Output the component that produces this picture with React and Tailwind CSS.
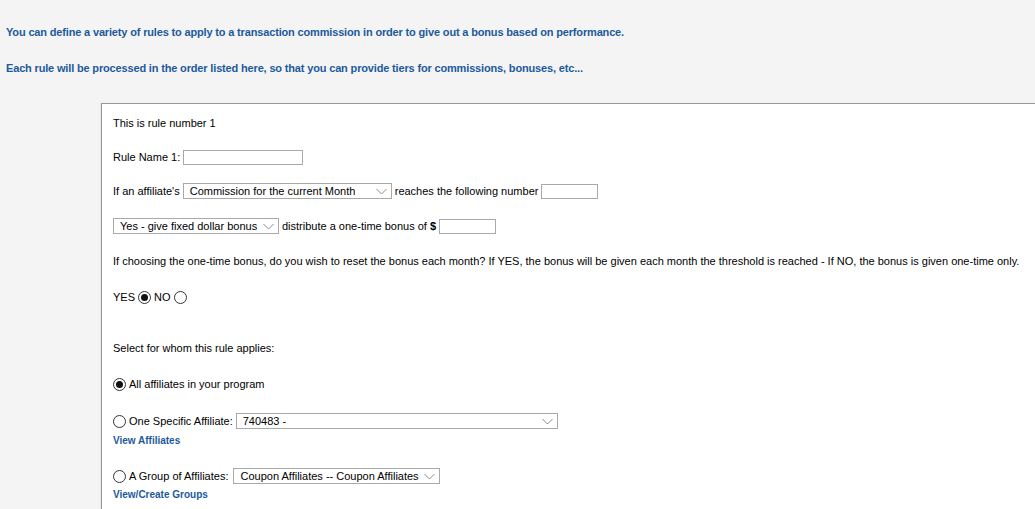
// Commission bonus rule editor — legacy admin form look.
function Chevron() {
  return (
    <svg width="11" height="7" viewBox="0 0 11 7" className="shrink-0" fill="none">
      <polyline points="0.5,1 5.5,6 10.5,1" stroke="#8a8a8a" strokeWidth="1" />
    </svg>
  )
}

function Select({ value, width }) {
  return (
    <span
      className={`inline-flex h-[16px] items-center justify-between border border-[#a9a9a9] bg-white pl-[6px] pr-[4px] text-[11px] leading-none text-black ${width}`}
    >
      <span className="truncate">{value}</span>
      <Chevron />
    </span>
  )
}

function TextBox({ width }) {
  return <span className={`inline-block h-[15px] border border-[#a9a9a9] bg-white ${width}`} />
}

function Radio({ checked }) {
  return (
    <span className="inline-flex h-[13px] w-[13px] shrink-0 items-center justify-center rounded-full border border-[#333] bg-white">
      {checked && <span className="h-[7px] w-[7px] rounded-full bg-[#111]" />}
    </span>
  )
}

export default function App() {
  return (
    <div
      className="min-h-[509px] bg-[#f4f4f4] pt-[26px] text-[11px] text-black"
      style={{ fontFamily: '"Liberation Sans", Arial, sans-serif' }}
    >
      <p className="pl-[6px] text-[11px] font-bold leading-[13px] tracking-[-0.16px] text-[#1c5a9c]">
        You can define a variety of rules to apply to a transaction commission in order to give out a bonus based on performance.
      </p>
      <p className="mt-[23px] pl-[6px] text-[11px] font-bold leading-[13px] tracking-[-0.16px] text-[#1c5a9c]">
        Each rule will be processed in the order listed here, so that you can provide tiers for commissions, bonuses, etc...
      </p>

      <section className="ml-[101px] mt-[28px] border-l border-t border-[#999] bg-white pb-[20px] pl-[11px] pt-[11px] shadow-[0_1px_2px_rgba(0,0,0,0.15)]">
        <div className="flex h-[16px] items-center">This is rule number 1</div>

        <div className="mt-[18px] flex h-[16px] items-center gap-[3px]">
          <span>Rule Name 1:</span>
          <TextBox width="w-[120px]" />
        </div>

        <div className="mt-[18px] flex h-[16px] items-center gap-[3px]">
          <span>If an affiliate's</span>
          <Select value="Commission for the current Month" width="w-[209px]" />
          <span>reaches the following number</span>
          <TextBox width="w-[57px]" />
        </div>

        <div className="mt-[19px] flex h-[16px] items-center gap-[3px]">
          <Select value="Yes - give fixed dollar bonus" width="w-[166px]" />
          <span>distribute a one-time bonus of <b>$</b></span>
          <TextBox width="w-[57px]" />
        </div>

        <div className="mt-[19px] flex h-[16px] items-center whitespace-nowrap">
          If choosing the one-time bonus, do you wish to reset the bonus each month? If YES, the bonus will be given each month the threshold is reached - If NO, the bonus is given one-time only.
        </div>

        <div className="mt-[20px] flex h-[16px] items-center gap-[3px]">
          <span>YES</span>
          <Radio checked />
          <span>NO</span>
          <Radio />
        </div>

        <div className="mt-[35px] flex h-[16px] items-center">Select for whom this rule applies:</div>

        <div className="mt-[20px] flex h-[16px] items-center gap-[3px]">
          <Radio checked />
          <span>All affiliates in your program</span>
        </div>

        <div className="mt-[21px] flex h-[16px] items-center gap-[3px]">
          <Radio />
          <span>One Specific Affiliate:</span>
          <Select value="740483 -" width="w-[322px]" />
        </div>
        <div className="mt-[3px] flex h-[16px] items-center text-[10px] font-bold text-[#1c5a9c]">View Affiliates</div>

        <div className="mt-[20px] flex h-[16px] items-center gap-[3px]">
          <Radio />
          <span>A Group of Affiliates:</span>
          <Select value="Coupon Affiliates -- Coupon Affiliates" width="ml-[2px] w-[207px]" />
        </div>
        <div className="mt-[2px] flex h-[16px] items-center text-[10px] font-bold text-[#1c5a9c]">View/Create Groups</div>
      </section>
    </div>
  )
}
